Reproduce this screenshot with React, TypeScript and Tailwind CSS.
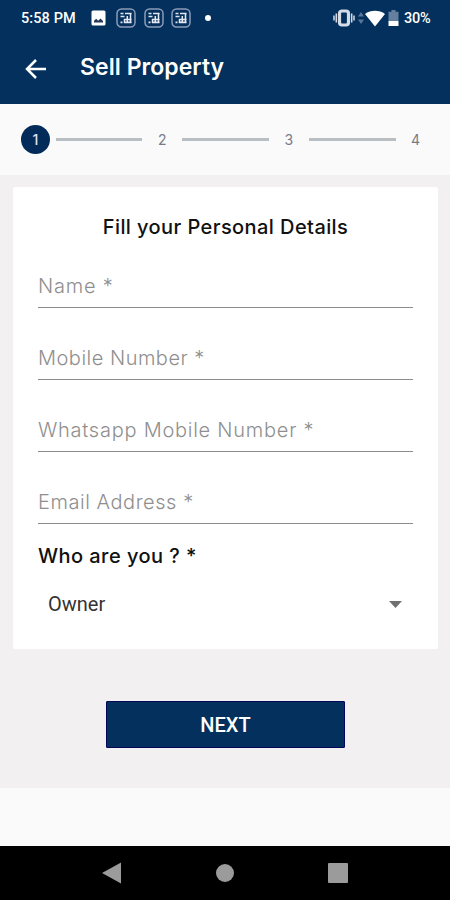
import React, { useState } from 'react';

const steps = [1, 2, 3, 4];

const fields = [
    { id: 'name', label: 'Name *', tracking: 'tracking-[0.8px]' },
    { id: 'mobile', label: 'Mobile Number *', tracking: 'tracking-[0.5px]' },
    { id: 'whatsapp', label: 'Whatsapp Mobile Number *', tracking: 'tracking-[0.75px]' },
    { id: 'email', label: 'Email Address *', tracking: 'tracking-[0.55px]' },
];

const AppIcon: React.FC = () => (
    <svg width="20" height="20" viewBox="0 0 20 20" fill="none">
        <rect x="1" y="1" width="18" height="18" rx="4.5" stroke="#8d9bb8" strokeWidth="1.5" />
        <path d="M4.500 5.500h3M9 5.500h6.500M4.500 8.500h4M4.500 14.300h2M8 14.300h7.500M8 11.500h7.500" stroke="#dfe4f0" strokeWidth="1.7" />
        <path d="M11.300 8v7M14.500 5v10M8.500 11v4" stroke="#e6eaf4" strokeWidth="1.5" />
    </svg>
);

const StatusBar: React.FC = () => (
    <div className="flex h-9 items-center justify-between pl-[21px] pr-[19px] font-['Roboto',sans-serif] text-white">
        <div className="flex items-center">
            <span className="w-[70px] whitespace-nowrap pt-px text-[14.5px] font-medium tracking-[0.1px]">5:58 PM</span>
            <svg width="15" height="16" viewBox="0 0 15 16">
                <rect x="0.5" y="0.5" width="14" height="15" rx="1.5" fill="#fff" />
                <path d="M3 12.5v-1.800l2.200-2 2 2 2.300-2.200 2.500 2.400v1.600z" fill="#263858" />
            </svg>
            <div className="ml-[10px] flex gap-[7.5px]">
                <AppIcon />
                <AppIcon />
                <AppIcon />
            </div>
            <span className="ml-[13.5px] h-[6px] w-[6px] rounded-full bg-white" />
        </div>
        <div className="flex items-center">
            <svg width="22" height="18" viewBox="0 0 22 18" fill="none">
                <path d="M1 6.500v5M3.300 4.500v9M21 6.500v5M18.700 4.500v9" stroke="#d6dbe8" strokeWidth="1.5" />
                <rect x="6.500" y="2" width="9" height="14" rx="2.500" stroke="#d6dbe8" strokeWidth="3.200" />
            </svg>
            <svg className="ml-[3px]" width="6" height="12" viewBox="0 0 6 12" fill="#5c7696">
                <path d="M3 0l3 4.500H0zM3 12l3-4.500H0z" />
            </svg>
            <svg className="ml-px" width="20" height="17" viewBox="0 0 20 17" fill="#fff">
                <path d="M10 16.500L0 4C5.500 -.3 14.500 -.3 20 4z" />
            </svg>
            <svg className="ml-[3px]" width="11" height="16" viewBox="0 0 11 16">
                <path d="M3.500 0h4v1.800H10.500V11H.5V1.800h3z" fill="#64809e" />
                <path d="M.5 11h10v5H.5z" fill="#fff" />
            </svg>
            <span className="ml-[5px] w-[27px] whitespace-nowrap pt-px text-[14.5px] font-medium tracking-[-0.3px]">30%</span>
        </div>
    </div>
);

const Header: React.FC = () => (
    <header className="h-[104px] bg-[#03305c]">
        <StatusBar />
        <div className="flex h-[62px] items-center pl-[25px]">
            <button type="button" aria-label="Back">
                <svg className="mt-[4px]" width="22" height="20" viewBox="0 0 22 20" fill="none" stroke="#fff" strokeWidth="2.5">
                    <path d="M21 10H2.500M11 1L2 10l9 9" />
                </svg>
            </button>
            <h1 className="ml-[33px] whitespace-nowrap text-[23px] font-semibold tracking-[0.05px] text-white">Sell Property</h1>
        </div>
    </header>
);

const Stepper: React.FC<{ current: number }> = ({ current }) => (
    <div className="flex h-[71px] items-center bg-[#fafafa] pl-[21px] pr-5">
        {steps.map((step) => (
            <React.Fragment key={step}>
                {step > 1 && <span className="mx-[5.5px] h-[3px] flex-1 bg-[#b9bec2]" />}
                {step === current ? (
                    <span className="flex h-[29px] w-[29px] items-center justify-center rounded-full bg-[#032b5a] text-sm font-medium text-[#dfe2ee]">{step}</span>
                ) : (
                    <span className="flex h-[29px] w-[29px] items-center justify-center text-sm text-[#777b88]">{step}</span>
                )}
            </React.Fragment>
        ))}
    </div>
);

const App: React.FC = () => {
    const [values, setValues] = useState<Record<string, string>>({});

    return (
        <div className="flex h-[900px] w-[450px] flex-col overflow-hidden bg-[#fafafa] font-['Inter',sans-serif]">
            <Header />
            <Stepper current={1} />

            <main className="h-[613px] bg-[#f2f0f1] pl-[13px] pr-3 pt-3">
                <section className="h-[462px] rounded-[2px] bg-white px-[25px] pt-[25px]">
                    <h2 className="whitespace-nowrap text-center text-[20px] font-medium leading-[30px] tracking-[0.42px] text-[#111]">Fill your Personal Details</h2>
                    <div className="-mt-[6px]">
                        {fields.map((field) => (
                            <input
                                key={field.id}
                                aria-label={field.label}
                                placeholder={field.label}
                                value={values[field.id] ?? ''}
                                onChange={(e) => setValues({ ...values, [field.id]: e.target.value })}
                                className={`block h-[72px] w-full border-b border-[#8c8c8c] pt-[28px] text-[20px] font-light outline-none placeholder:text-[#8f8f8f] ${field.tracking}`}
                            />
                        ))}
                    </div>
                    <p className="mt-[17px] whitespace-nowrap text-[20px] font-medium leading-[30px] tracking-[0.45px] text-[#111]">Who are you ? *</p>
                    <button type="button" className="mt-[18px] flex h-[30px] w-full items-center justify-between pl-[10px] pr-[11px] font-['Roboto',sans-serif] text-xl text-[#333]">
                        <span>Owner</span>
                        <svg width="13" height="7" viewBox="0 0 13 7" fill="#707070">
                            <path d="M0 0h13L6.500 7z" />
                        </svg>
                    </button>
                </section>

                <button type="button" className="mx-auto mt-[52px] block h-[47px] w-[239px] rounded-[1px] border border-[#06065a] bg-[#03305c] font-['Roboto',sans-serif] text-xl font-medium text-white">
                    NEXT
                </button>
            </main>

            <nav className="mt-auto flex h-[54px] items-center justify-between bg-black px-[102px]">
                <svg width="20" height="22" viewBox="0 0 20 22" fill="#9b9b9b">
                    <path d="M0 11L19 .5v21z" />
                </svg>
                <span className="h-[18px] w-[18px] rounded-full bg-[#9b9b9b]" />
                <span className="h-[20px] w-[20px] rounded-[1px] bg-[#9b9b9b]" />
            </nav>
        </div>
    );
};

export default App;
